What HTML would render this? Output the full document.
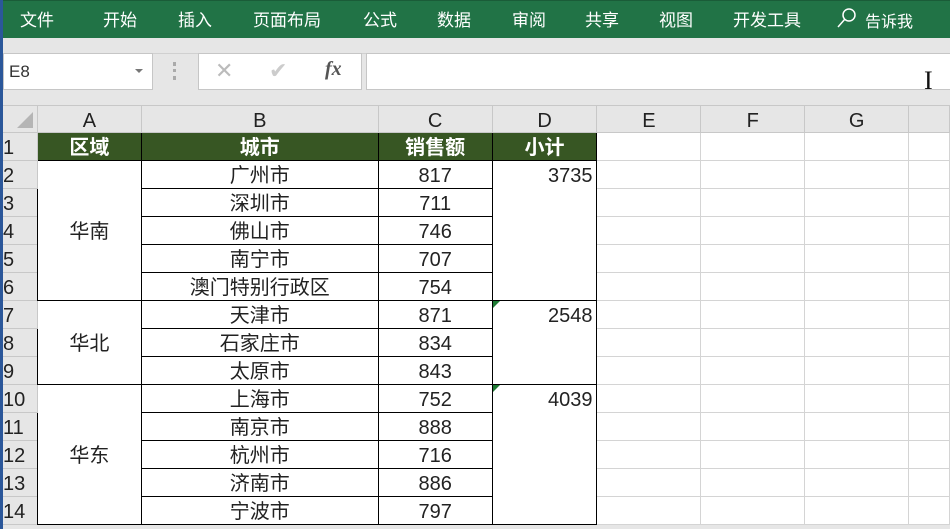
<!DOCTYPE html>
<html><head><meta charset="utf-8"><style>
*{margin:0;padding:0;box-sizing:border-box}
html,body{width:950px;height:529px;overflow:hidden}
body{background:#e6e6e6;font-family:"Liberation Sans","Noto Sans CJK SC",sans-serif;position:relative}
.rib{position:absolute;left:0;top:0;width:950px;height:38px;background:#217346;border-top:1px solid #1a5c38}
.rib span{position:absolute;top:5px;color:#fff;font-size:17px}
.box{position:absolute;background:#fff;border:1px solid #c6c6c6}
table{position:absolute;left:0;top:105px;border-collapse:collapse;table-layout:fixed;background:#fff}
td{height:28px;border:1px solid #d4d4d4;font-size:20px;line-height:20px;text-align:center;color:#222;padding:3px 0 0 0;white-space:nowrap;overflow:hidden;position:relative}
tr.h td{height:27px;background:#e6e6e6;color:#222;font-size:20px;border-color:#c8c8c8}
td.rh{background:#e6e6e6;text-align:left;padding-left:2px;border-color:#c8c8c8}
td.b{border:1px solid #000}
td.g{background:#375623;color:#fff;font-weight:bold;border:1px solid #000}
td.n{text-align:right;padding-right:4px}
.tri{position:absolute;left:0;top:0;width:0;height:0;border-top:7px solid #1e7b34;border-right:7px solid transparent}
</style></head><body>
<div style="position:absolute;left:0;top:0;width:3px;height:529px;background:#2b579a;z-index:5"></div>
<div class="rib">
<span style="left:20px">文件</span><span style="left:103px">开始</span><span style="left:178px">插入</span><span style="left:253px">页面布局</span><span style="left:363px">公式</span><span style="left:437px">数据</span><span style="left:512px">审阅</span><span style="left:585px">共享</span><span style="left:659px">视图</span><span style="left:733px">开发工具</span>
<svg style="position:absolute;left:836px;top:6px" width="22" height="22" viewBox="0 0 22 22"><circle cx="13" cy="8" r="6" fill="none" stroke="#fff" stroke-width="1.5"/><path d="M9 12 L2 20" stroke="#fff" stroke-width="1.5"/></svg>
<span style="left:865px;top:7px;font-size:16px">告诉我</span>
</div>
<div style="position:absolute;left:0;top:53px;width:950px;height:1px;background:#d0d0d0"></div>
<div class="box" style="left:3px;top:53px;width:150px;height:37px"><span style="position:absolute;left:5px;top:8px;font-size:17px;color:#333">E8</span><span style="position:absolute;left:131px;top:15px;border-top:4px solid #777;border-left:4px solid transparent;border-right:4px solid transparent"></span></div>
<div style="position:absolute;left:173px;top:62px;width:3px;height:18px;border-left:3px dotted #aaa"></div>
<div class="box" style="left:198px;top:53px;width:164px;height:37px">
<span style="position:absolute;left:16px;top:4px;font-size:22px;color:#bbb">✕</span>
<span style="position:absolute;left:70px;top:4px;font-size:22px;color:#ccc">✔</span>
<span style="position:absolute;left:126px;top:4px;font-size:20px;color:#555;font-family:'Liberation Serif',serif;font-style:italic;font-weight:bold">fx</span></div>
<div class="box" style="left:366px;top:53px;width:590px;height:37px"></div>
<div style="position:absolute;left:924px;top:66px;font-size:26px;font-family:'Liberation Serif',serif;color:#111">I</div>
<table>
<colgroup><col style="width:37px"><col style="width:104px"><col style="width:237px"><col style="width:114px"><col style="width:105px"><col style="width:104px"><col style="width:104px"><col style="width:104px"><col style="width:41px"></colgroup>
<tr class="h"><td><svg width="30" height="22" style="position:absolute;right:2px;bottom:2px"><path d="M28 4 L28 20 L12 20 Z" fill="#b5b5b5"/></svg></td><td>A</td><td>B</td><td>C</td><td>D</td><td>E</td><td>F</td><td>G</td><td></td></tr>
<tr><td class="rh">1</td><td class="g">区域</td><td class="g">城市</td><td class="g">销售额</td><td class="g">小计</td><td></td><td></td><td></td><td></td></tr>
<tr><td class="rh">2</td><td class="b" rowspan="5">华南</td><td class="b">广州市</td><td class="b">817</td><td class="b n" rowspan="5" style="vertical-align:top;padding-top:5px">3735</td><td></td><td></td><td></td><td></td></tr>
<tr><td class="rh">3</td><td class="b">深圳市</td><td class="b">711</td><td></td><td></td><td></td><td></td></tr>
<tr><td class="rh">4</td><td class="b">佛山市</td><td class="b">746</td><td></td><td></td><td></td><td></td></tr>
<tr><td class="rh">5</td><td class="b">南宁市</td><td class="b">707</td><td></td><td></td><td></td><td></td></tr>
<tr><td class="rh">6</td><td class="b">澳门特别行政区</td><td class="b">754</td><td></td><td></td><td></td><td></td></tr>
<tr><td class="rh">7</td><td class="b" rowspan="3">华北</td><td class="b">天津市</td><td class="b">871</td><td class="b n" rowspan="3" style="vertical-align:top;padding-top:5px"><div class="tri"></div>2548</td><td></td><td></td><td></td><td></td></tr>
<tr><td class="rh">8</td><td class="b">石家庄市</td><td class="b">834</td><td></td><td></td><td></td><td></td></tr>
<tr><td class="rh">9</td><td class="b">太原市</td><td class="b">843</td><td></td><td></td><td></td><td></td></tr>
<tr><td class="rh">10</td><td class="b" rowspan="5">华东</td><td class="b">上海市</td><td class="b">752</td><td class="b n" rowspan="5" style="vertical-align:top;padding-top:5px"><div class="tri"></div>4039</td><td></td><td></td><td></td><td></td></tr>
<tr><td class="rh">11</td><td class="b">南京市</td><td class="b">888</td><td></td><td></td><td></td><td></td></tr>
<tr><td class="rh">12</td><td class="b">杭州市</td><td class="b">716</td><td></td><td></td><td></td><td></td></tr>
<tr><td class="rh">13</td><td class="b">济南市</td><td class="b">886</td><td></td><td></td><td></td><td></td></tr>
<tr><td class="rh">14</td><td class="b">宁波市</td><td class="b">797</td><td></td><td></td><td></td><td></td></tr>
</table>
</body></html>
